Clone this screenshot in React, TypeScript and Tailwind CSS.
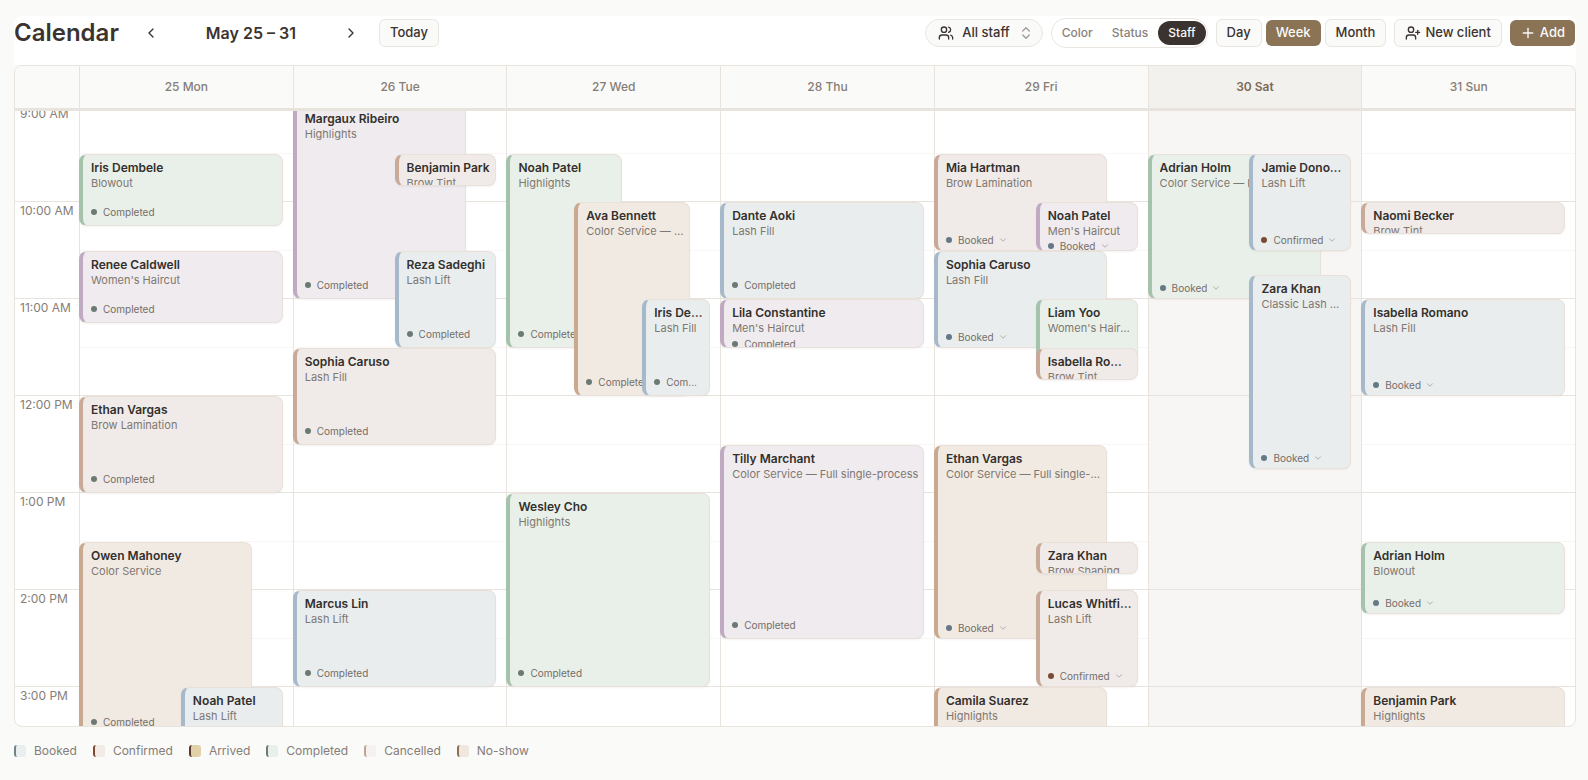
import { ChevronDown, ChevronLeft, ChevronRight, ChevronsUpDown, Plus, UserPlus, Users } from 'lucide-react';

type Tone = 'green' | 'purple' | 'blue' | 'tan' | 'rose';
type Status = 'Completed' | 'Booked' | 'Confirmed';

interface Appointment {
  name: string;
  service: string;
  start: number;
  end: number;
  tone: Tone;
  status?: Status;
  // overlap lane and how many lanes share the slot
  lane?: number;
  lanes?: number;
}

interface Day {
  label: string;
  today?: boolean;
  items: Appointment[];
}

const HOUR_HEIGHT = 97;
const FIRST_HOUR = 9;

const hours = ['9:00 AM', '10:00 AM', '11:00 AM', '12:00 PM', '1:00 PM', '2:00 PM', '3:00 PM'];

const tones: Record<Tone, string> = {
  green: 'bg-[#e9f0e9] border-l-[#a5c2ab]',
  purple: 'bg-[#efebee] border-l-[#bfaac1]',
  blue: 'bg-[#e9edee] border-l-[#a5b9cb]',
  tan: 'bg-[#f1eae3] border-l-[#c9a98f]',
  rose: 'bg-[#f0ebe8] border-l-[#c9a997]',
};

const dots: Record<Status, string> = {
  Completed: 'bg-[#6b7a72]',
  Booked: 'bg-[#647885]',
  Confirmed: 'bg-[#7a4a35]',
};

const days: Day[] = [
  {
    label: '25 Mon',
    items: [
      { name: 'Iris Dembele', service: 'Blowout', start: 9.5, end: 10.25, tone: 'green', status: 'Completed' },
      { name: 'Renee Caldwell', service: "Women's Haircut", start: 10.5, end: 11.25, tone: 'purple', status: 'Completed' },
      { name: 'Ethan Vargas', service: 'Brow Lamination', start: 12, end: 13, tone: 'rose', status: 'Completed' },
      { name: 'Owen Mahoney', service: 'Color Service', start: 13.5, end: 15.5, tone: 'tan', status: 'Completed', lane: 0, lanes: 2 },
      { name: 'Noah Patel', service: 'Lash Lift', start: 15, end: 16, tone: 'blue', status: 'Completed', lane: 1, lanes: 2 },
    ],
  },
  {
    label: '26 Tue',
    items: [
      { name: 'Margaux Ribeiro', service: 'Highlights', start: 9, end: 11, tone: 'purple', status: 'Completed', lane: 0, lanes: 2 },
      { name: 'Benjamin Park', service: 'Brow Tint', start: 9.5, end: 9.83, tone: 'rose', lane: 1, lanes: 2 },
      { name: 'Reza Sadeghi', service: 'Lash Lift', start: 10.5, end: 11.5, tone: 'blue', status: 'Completed', lane: 1, lanes: 2 },
      { name: 'Sophia Caruso', service: 'Lash Fill', start: 11.5, end: 12.5, tone: 'rose', status: 'Completed' },
      { name: 'Marcus Lin', service: 'Lash Lift', start: 14, end: 15, tone: 'blue', status: 'Completed' },
    ],
  },
  {
    label: '27 Wed',
    items: [
      { name: 'Noah Patel', service: 'Highlights', start: 9.5, end: 11.5, tone: 'green', status: 'Completed', lane: 0, lanes: 3 },
      { name: 'Ava Bennett', service: 'Color Service — Full single-process', start: 10, end: 12, tone: 'tan', status: 'Completed', lane: 1, lanes: 3 },
      { name: 'Iris Dembele', service: 'Lash Fill', start: 11, end: 12, tone: 'blue', status: 'Completed', lane: 2, lanes: 3 },
      { name: 'Wesley Cho', service: 'Highlights', start: 13, end: 15, tone: 'green', status: 'Completed' },
    ],
  },
  {
    label: '28 Thu',
    items: [
      { name: 'Dante Aoki', service: 'Lash Fill', start: 10, end: 11, tone: 'blue', status: 'Completed' },
      { name: 'Lila Constantine', service: "Men's Haircut", start: 11, end: 11.5, tone: 'purple', status: 'Completed' },
      { name: 'Tilly Marchant', service: 'Color Service — Full single-process', start: 12.5, end: 14.5, tone: 'purple', status: 'Completed' },
    ],
  },
  {
    label: '29 Fri',
    items: [
      { name: 'Mia Hartman', service: 'Brow Lamination', start: 9.5, end: 10.5, tone: 'rose', status: 'Booked', lane: 0, lanes: 2 },
      { name: 'Noah Patel', service: "Men's Haircut", start: 10, end: 10.5, tone: 'purple', status: 'Booked', lane: 1, lanes: 2 },
      { name: 'Sophia Caruso', service: 'Lash Fill', start: 10.5, end: 11.5, tone: 'blue', status: 'Booked', lane: 0, lanes: 2 },
      { name: 'Liam Yoo', service: "Women's Haircut", start: 11, end: 11.75, tone: 'green', lane: 1, lanes: 2 },
      { name: 'Isabella Romano', service: 'Brow Tint', start: 11.5, end: 11.83, tone: 'rose', lane: 1, lanes: 2 },
      { name: 'Ethan Vargas', service: 'Color Service — Full single-process', start: 12.5, end: 14.5, tone: 'tan', status: 'Booked', lane: 0, lanes: 2 },
      { name: 'Zara Khan', service: 'Brow Shaping', start: 13.5, end: 13.84, tone: 'rose', lane: 1, lanes: 2 },
      { name: 'Lucas Whitfield', service: 'Lash Lift', start: 14, end: 15, tone: 'rose', status: 'Confirmed', lane: 1, lanes: 2 },
      { name: 'Camila Suarez', service: 'Highlights', start: 15, end: 16, tone: 'tan', status: 'Booked', lane: 0, lanes: 2 },
    ],
  },
  {
    label: '30 Sat',
    today: true,
    items: [
      { name: 'Adrian Holm', service: 'Color Service — Root touch-up', start: 9.5, end: 11, tone: 'green', status: 'Booked', lane: 0, lanes: 2 },
      { name: 'Jamie Donovan', service: 'Lash Lift', start: 9.5, end: 10.5, tone: 'blue', status: 'Confirmed', lane: 1, lanes: 2 },
      { name: 'Zara Khan', service: 'Classic Lash Makeover', start: 10.75, end: 12.75, tone: 'blue', status: 'Booked', lane: 1, lanes: 2 },
    ],
  },
  {
    label: '31 Sun',
    items: [
      { name: 'Naomi Becker', service: 'Brow Tint', start: 10, end: 10.33, tone: 'rose' },
      { name: 'Isabella Romano', service: 'Lash Fill', start: 11, end: 12, tone: 'blue', status: 'Booked' },
      { name: 'Adrian Holm', service: 'Blowout', start: 13.5, end: 14.25, tone: 'green', status: 'Booked' },
      { name: 'Benjamin Park', service: 'Highlights', start: 15, end: 16, tone: 'tan', status: 'Booked' },
    ],
  },
];

const legend = [
  { label: 'Booked', swatch: 'bg-[#e9eeee] border-l-[#71828b]' },
  { label: 'Confirmed', swatch: 'bg-[#f2eae4] border-l-[#7a4a35]' },
  { label: 'Arrived', swatch: 'bg-[#e2d0ab] border-l-[#5c3a2a]' },
  { label: 'Completed', swatch: 'bg-[#e9efea] border-l-[#6b7a72]' },
  { label: 'Cancelled', swatch: 'bg-[#f4f1ee] border-l-[#c4a294]' },
  { label: 'No-show', swatch: 'bg-[#f0e7df] border-l-[#8b7055]' },
];

const outlineButton =
  'h-7 rounded-md border border-[#ebe5df] bg-[#fafaf8] text-[13px] font-medium text-[#3b3330] flex items-center';

function AppointmentCard({ item }: { item: Appointment }) {
  const lane = item.lane ?? 0;
  const lanes = item.lanes ?? 1;
  const base = 100 / lanes;
  const width = lane < lanes - 1 ? base * 1.7 : base;
  const editable = item.status !== 'Completed';

  return (
    <article
      className={`absolute flex flex-col overflow-hidden rounded-lg border border-l-4 border-[#e8e0d9] py-[5px] pr-1 pl-2 shadow-xs ${tones[item.tone]}`}
      style={{
        top: (item.start - FIRST_HOUR) * HOUR_HEIGHT,
        height: (item.end - item.start) * HOUR_HEIGHT,
        left: `${lane * base}%`,
        width: `${width}%`,
      }}
    >
      <h3 className="shrink-0 truncate pr-px text-xs font-semibold text-[#33302d]">{item.name}</h3>
      <p className="shrink-0 truncate text-[11px] leading-[15px] text-[#7f7771]">{item.service}</p>
      {item.status && (
        <div
          className={`mt-auto flex shrink-0 items-center pr-1 text-[10px] text-[#756d67] ${
            editable ? '-mb-0.5 leading-[14px]' : 'leading-4'
          }`}
        >
          <span className={`mr-1.5 size-1.5 shrink-0 rounded-full ${dots[item.status]}`} />
          <span className="truncate">{item.status}</span>
          {editable && <ChevronDown className="ml-1 size-2.5 shrink-0 text-[#a8a09a]" />}
        </div>
      )}
    </article>
  );
}

function Toolbar() {
  return (
    <header className="flex items-start justify-between rounded-t-lg bg-white pt-[2px] pr-px pb-[17px]">
      <div className="flex h-[30px] items-center">
        <h1 className="text-2xl font-semibold text-[#3b3330]">Calendar</h1>
        <button aria-label="Previous week" className="ml-[18px] flex size-7 items-center justify-center text-[#3b3330]">
          <ChevronLeft className="size-4" />
        </button>
        <span className="w-[172px] text-center text-base font-semibold text-[#3b3330]">May 25 – 31</span>
        <button aria-label="Next week" className="flex size-7 items-center justify-center text-[#3b3330]">
          <ChevronRight className="size-4" />
        </button>
        <button className={`${outlineButton} ml-3.5 px-2.5`}>Today</button>
      </div>

      <div className="flex h-[30px] items-center gap-2">
        <button className="flex h-7 items-center gap-2 rounded-full border border-[#ebe5df] bg-[#fafaf8] pr-2 pl-3 text-[13px] font-medium text-[#3b3330]">
          <Users className="size-4" />
          All staff
          <ChevronsUpDown className="size-4 text-[#a39b94]" />
        </button>
        <div className="flex h-[30px] items-center rounded-full border border-[#ebe5df] bg-white p-px text-xs font-medium text-[#8a827b]">
          <button className="h-6 rounded-full px-[9px]">Color</button>
          <button className="h-6 rounded-full px-2.5">Status</button>
          <button className="h-6 rounded-full bg-[#3b3330] px-2.5 text-[#fafaf8]">Staff</button>
        </div>
        <div className="flex items-center gap-1">
          <button className={`${outlineButton} px-2.5`}>Day</button>
          <button className="h-[26px] rounded-md bg-[#8b7355] px-2.5 text-[13px] font-medium text-[#fafaf8]">Week</button>
          <button className={`${outlineButton} px-2.5`}>Month</button>
        </div>
        <button className={`${outlineButton} gap-1 px-2.5`}>
          <UserPlus className="size-4" />
          New client
        </button>
        <button className="flex h-[26px] items-center gap-1 rounded-md bg-[#8b7355] px-2.5 text-[13px] font-medium text-[#fafaf8]">
          <Plus className="size-4" />
          Add
        </button>
      </div>
    </header>
  );
}

function WeekGrid() {
  return (
    <section className="flex min-h-0 flex-1 flex-col overflow-hidden rounded-lg border border-[#e8e3dd] bg-white">
      <div className="flex shrink-0 border-b-3 border-[#e8e3dd] bg-[#fafaf8]">
        <div className="w-16 shrink-0" />
        {days.map((day) => (
          <div
            key={day.label}
            className={`flex h-[42px] flex-1 items-center justify-center border-l border-[#e8e3dd] text-xs ${
              day.today ? 'bg-[#f3f1ee] font-semibold text-[#7d6a54]' : 'font-medium text-[#857d77]'
            }`}
          >
            {day.label}
          </div>
        ))}
      </div>

      <div className="min-h-0 flex-1 overflow-y-auto [scrollbar-width:none]">
        <div className="-mt-1.5 flex">
          <div className="w-16 shrink-0">
            {hours.map((hour) => (
              <div key={hour} className="h-[97px] border-b border-[#e8e3dd] px-[5px] text-xs leading-[18px] whitespace-nowrap text-[#857d77]">
                {hour}
              </div>
            ))}
          </div>
          {days.map((day) => (
            <div key={day.label} className={`relative min-w-0 flex-1 ${day.today ? 'bg-[#f8f6f4]' : ''}`}>
              {hours.map((hour) => (
                <div key={hour} className="h-[97px] border-b border-l border-[#e8e3dd]">
                  <div className="h-12" />
                  <div className={`h-12 border-t ${day.today ? 'border-transparent' : 'border-[#f9f7f5]'}`} />
                </div>
              ))}
              <div className="absolute inset-y-0 right-2.5 left-0">
                {day.items.map((item) => (
                  <AppointmentCard key={item.name + item.start} item={item} />
                ))}
              </div>
            </div>
          ))}
        </div>
      </div>
    </section>
  );
}

export default function App() {
  return (
    <div className="flex h-screen flex-col bg-[#fafaf8] pt-4 pr-3 pb-5 pl-3.5 font-['Inter',sans-serif]">
      <Toolbar />
      <WeekGrid />
      <footer className="mt-[15px] flex items-center gap-4 text-xs leading-[18px] text-[#857d77]">
        {legend.map((entry) => (
          <span key={entry.label} className="flex items-center gap-2">
            <span className={`size-3 rounded-[3px] border-l-2 ${entry.swatch}`} />
            {entry.label}
          </span>
        ))}
      </footer>
    </div>
  );
}
